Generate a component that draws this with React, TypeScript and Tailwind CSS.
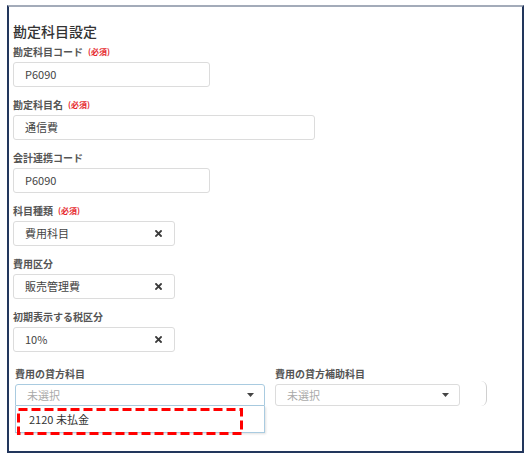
import React from 'react'

const font = { fontFamily: '"Noto Sans CJK JP", "Noto Sans", sans-serif' }

const Label = ({ text, required }: { text: string; required?: boolean }) => (
  <div className="h-[14px] leading-[14px] mb-[3px] text-[10px] font-bold text-[#555] flex items-center">
    <span>{text}</span>
    {required && <span className="ml-[5px] text-[8px] font-bold text-[#e5272d]">(必須)</span>}
  </div>
)

const ClearIcon = () => (
  <svg width="7" height="7" viewBox="0 0 7 7" className="shrink-0">
    <path d="M1 1 L6 6 M6 1 L1 6" stroke="#3a3a3a" strokeWidth="1.8" strokeLinecap="square" />
  </svg>
)

const Caret = () => (
  <svg width="7" height="4" viewBox="0 0 7 4" className="shrink-0">
    <path d="M0 0 H7 L3.5 4 Z" fill="#444" />
  </svg>
)

const TextField = ({ label, value, width, required }: { label: string; value: string; width: string; required?: boolean }) => (
  <div>
    <Label text={label} required={required} />
    <div className={`${width} h-[25px] border border-[#dcdcdc] rounded-[3px] bg-white pl-[11px] flex items-center text-[11px] text-[#444]`}>
      {value}
    </div>
  </div>
)

const SelectField = ({ label, value, required }: { label: string; value: string; required?: boolean }) => (
  <div>
    <Label text={label} required={required} />
    <div className="w-[162px] h-[25px] border border-[#dcdcdc] rounded-[3px] bg-white pl-[11px] pr-[12px] flex items-center justify-between text-[11px] text-[#444]">
      <span>{value}</span>
      <ClearIcon />
    </div>
  </div>
)

export default function App() {
  return (
    <div className="min-h-[459px] bg-white" style={font}>
      <div className="relative ml-[7px] mt-[5px] w-[517px] h-[448px] border-2 border-[#22365c] border-t-[#a3abb9] bg-white">
        <div className="pl-[4px] pt-[14px]">
          <h1 className="text-[14px] leading-5 font-medium text-[#333]">勘定科目設定</h1>
          <div className="mt-[4px] flex flex-col gap-[11px]">
            <TextField label="勘定科目コード" value="P6090" width="w-[197px]" required />
            <TextField label="勘定科目名" value="通信費" width="w-[302px]" required />
            <TextField label="会計連携コード" value="P6090" width="w-[197px]" />
            <SelectField label="科目種類" value="費用科目" required />
            <SelectField label="費用区分" value="販売管理費" />
            <SelectField label="初期表示する税区分" value="10%" />
          </div>

          <div className="mt-[15px] pl-[2px] flex items-start">
            <div className="w-[250px]">
              <Label text="費用の貸方科目" />
              <div className="relative">
                <div className="h-[22px] border border-[#a9cbe0] rounded-t-[3px] bg-white pl-[11px] pr-[10px] flex items-center justify-between text-[11px] text-[#aaa]">
                  <span>未選択</span>
                  <Caret />
                </div>
                <div className="absolute left-0 top-full w-full h-[27px] border border-t-0 border-[#a9cbe0] bg-white shadow-[1px_1px_2px_rgba(0,0,0,0.12)] pl-[13px] flex items-center text-[11px] text-[#333]">
                  2120 未払金
                </div>
                <svg className="absolute left-[2px] top-[24px]" width="226" height="27" viewBox="0 0 226 27">
                  <rect x="1.5" y="1.5" width="223" height="24" fill="none" stroke="#f00" strokeWidth="3" strokeDasharray="9 4" />
                </svg>
              </div>
            </div>
            <div className="ml-[10px] w-[185px]">
              <Label text="費用の貸方補助科目" />
              <div className="h-[22px] border border-[#dcdcdc] rounded-[3px] bg-white pl-[11px] pr-[10px] flex items-center justify-between text-[11px] text-[#aaa]">
                <span>未選択</span>
                <Caret />
              </div>
            </div>
            <div className="ml-[20px] mt-[14px] w-[7px] h-[25px] border-r border-r-[#d0d0d0] rounded-r-[6px]" />
          </div>
        </div>
      </div>
    </div>
  )
}
